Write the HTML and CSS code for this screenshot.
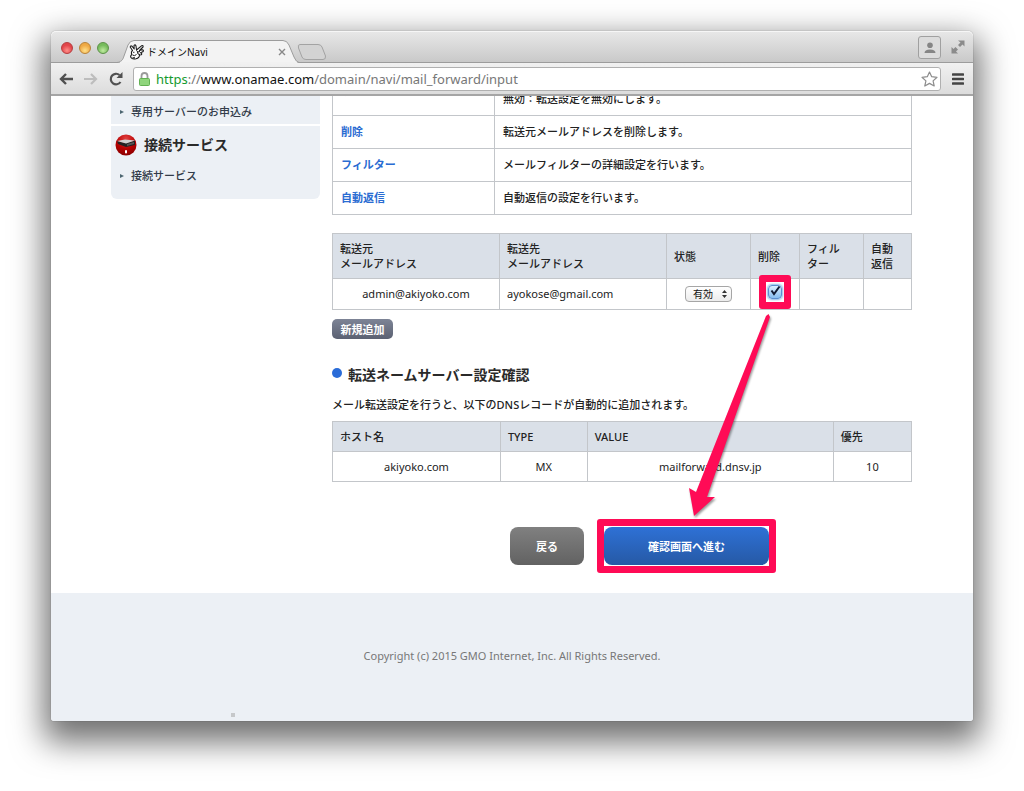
FILE: index.html
```html
<!DOCTYPE html>
<html lang="ja">
<head>
<meta charset="utf-8">
<title>ドメインNavi</title>
<link rel="stylesheet" href="styles.css">
</head>
<body>
<div class="window">
  <header class="chrome">
    <div class="tabbar">
      <div class="lights">
        <button class="light light-red" type="button" aria-label="閉じる"></button>
        <button class="light light-amber" type="button" aria-label="しまう"></button>
        <button class="light light-green" type="button" aria-label="拡大"></button>
      </div>
      <div class="tab">
        <svg class="tab-shape" viewBox="0 0 182 23" aria-hidden="true">
          <path d="M0 22.500C5 22 6 19 7 16L11 5Q13 .5 17 .5H166Q170 .5 172 5L177 17Q179 22 182 22.500" fill="#f3f3f3" stroke="#9c9c9c"/>
          <path d="M3 22.500H180" stroke="#f1f1f1" stroke-width="1.500"/>
        </svg>
        <svg class="favicon" viewBox="0 0 16 16" aria-hidden="true">
          <path d="M3.500 6.500L1.200 3Q1.500 1.200 3 2.200L5.200 5L5 1.500Q6.200 0 7 2L7.500 6L12.500 1.800Q14.500 1 14 3L10.500 6.500L13.500 5.800Q15.200 6.500 13.800 7.800L11.500 8.800Q13.500 9.500 12.200 10.800L10.500 11Q10.500 14 7 14.800Q3 15.500 2 13.500Q1 12 2.800 10.500Q1.800 8 3.500 6.500Z" fill="#fff" stroke="#1c1c1c" stroke-width="1.100" stroke-linejoin="round"/>
          <path d="M7.500 6.500L8.800 8L11 7.500M8.500 8L9 10L11 10.500M3.500 11Q5.500 12.500 7.500 10.500" fill="none" stroke="#1c1c1c"/>
          <path d="M4.300 8.300H5.300M3.500 13.800H6" stroke="#1c1c1c" stroke-width="1.200"/>
        </svg>
        <span class="tab-title">ドメインNavi</span>
        <button class="tab-close" type="button" aria-label="タブを閉じる"><svg viewBox="0 0 8 8" width="8" height="8"><path d="M1 1L7 7M7 1L1 7" stroke="#888" stroke-width="1.400"/></svg></button>
      </div>
      <button class="newtab" type="button" aria-label="新しいタブ"><svg viewBox="0 0 30 16" width="30" height="16"><path d="M3 .5H21Q24 .5 25 3L28.500 12Q29 15.500 26 15.500H9Q6 15.500 5 13L1.500 4Q.5 .5 3 .5Z" fill="#d3d3d3" stroke="#a3a3a3"/></svg></button>
      <span class="spacer"></span>
      <button class="profile" type="button" aria-label="ユーザー"><svg viewBox="0 0 12 12" width="12" height="12"><circle cx="6" cy="3.200" r="2.800" fill="#858585"/><path d="M.5 11Q.5 7.500 6 7.500T11.500 11Z" fill="#858585"/></svg></button>
      <button class="fullscreen" type="button" aria-label="フルスクリーン"><svg viewBox="0 0 14 14" width="14" height="14"><path d="M7 .5H13.500V6.500L11.500 4.500L9 7L7 5L9.500 2.500ZM.5 7V13.500H7L5 11.500L7 9.500L4.500 7L2.500 9Z" fill="#8b8b8b"/></svg></button>
    </div>
    <div class="toolbar">
      <button class="nav" type="button" aria-label="戻る"><svg viewBox="0 0 14 12" width="14" height="12"><path d="M7 1L2 6L7 11M2 6H14" fill="none" stroke="#505050" stroke-width="2.400"/></svg></button>
      <button class="nav" type="button" aria-label="進む"><svg viewBox="0 0 14 12" width="14" height="12"><path d="M7 1L12 6L7 11M12 6H0" fill="none" stroke="#bdbdbd" stroke-width="2.200"/></svg></button>
      <button class="nav" type="button" aria-label="再読み込み"><svg viewBox="0 0 14 14" width="14" height="14"><path d="M11.500 10A5.300 5.300 0 1 1 10.500 3" fill="none" stroke="#505050" stroke-width="2.200"/><path d="M13.500 0V6H7.500Z" fill="#505050"/></svg></button>
      <div class="address">
        <svg class="lock" viewBox="0 0 11 14" width="11" height="14" aria-hidden="true"><path d="M2.500 7V4A3 3 0 0 1 8.500 4V7" fill="none" stroke="#9a9a9a" stroke-width="1.800"/><rect x=".5" y="6.500" width="10" height="7" rx="1" fill="#8fd57c" stroke="#62b152"/></svg>
        <a class="url" href="#"><span class="secure">https</span>://<span class="host">www.onamae.com</span>/domain/navi/mail_forward/input</a>
        <button class="star" type="button" aria-label="ブックマーク"><svg viewBox="0 0 17 16" width="17" height="16"><path d="M8.500 1L10.700 5.700L16 6.300L12.100 9.900L13.200 15L8.500 12.400L3.800 15L4.900 9.900L1 6.300L6.300 5.700Z" fill="#fff" stroke="#8d8d8d" stroke-width="1.200" stroke-linejoin="round"/></svg></button>
      </div>
      <button class="menu" type="button" aria-label="メニュー"><svg viewBox="0 0 12 12" width="12" height="12"><path d="M1 1.500H11M1 6H11M1 10.500H11" stroke="#444" stroke-width="2.600" stroke-linecap="round"/></svg></button>
    </div>
  </header>

  <div class="page">
    <aside class="sidebar">
      <ul class="side-block">
        <li><a href="#">専用サーバーのお申込み</a></li>
      </ul>
      <section class="side-block side-last">
        <h2 class="side-title">
          <svg viewBox="0 0 22 22" width="22" height="22" aria-hidden="true">
            <defs><radialGradient id="ball" cx=".5" cy=".2" r=".8"><stop offset="0" stop-color="#e04040"/><stop offset=".6" stop-color="#b80000"/><stop offset="1" stop-color="#8a0000"/></radialGradient></defs>
            <circle cx="11" cy="11" r="10.500" fill="url(#ball)"/>
            <path d="M2 7L11 9L20 6.500V11L11 13L3 10Z" fill="#222"/>
            <path d="M2 7L10 5.500L20 6.500L11 9.500Z" fill="#d0d0d0"/>
            <path d="M12 10L19 8V10L12 12Z" fill="#555"/>
            <rect x="10" y="16" width="2" height="3.500" rx="1" fill="#fff"/>
          </svg>
          接続サービス
        </h2>
        <ul>
          <li><a href="#">接続サービス</a></li>
        </ul>
      </section>
    </aside>

    <main class="main">
      <table class="grid guide">
        <colgroup><col class="w-guide"><col></colgroup>
        <tbody>
          <tr class="tall"><th scope="row"><a href="#">状態</a></th><td>無効：転送設定を無効にします。</td></tr>
          <tr><th scope="row"><a href="#">削除</a></th><td>転送元メールアドレスを削除します。</td></tr>
          <tr><th scope="row"><a href="#">フィルター</a></th><td>メールフィルターの詳細設定を行います。</td></tr>
          <tr><th scope="row"><a href="#">自動返信</a></th><td>自動返信の設定を行います。</td></tr>
        </tbody>
      </table>

      <table class="grid forward">
        <colgroup><col class="w-addr"><col class="w-addr"><col class="w-state"><col class="w-del"><col class="w-filter"><col></colgroup>
        <thead>
          <tr><th>転送元<br>メールアドレス</th><th>転送先<br>メールアドレス</th><th>状態</th><th>削除</th><th>フィル<br>ター</th><th>自動<br>返信</th></tr>
        </thead>
        <tbody>
          <tr>
            <td class="center">admin@akiyoko.com</td>
            <td>ayokose@gmail.com</td>
            <td class="center">
              <span class="select-wrap">
                <select class="state" aria-label="状態"><option>有効</option></select>
                <svg class="updown" viewBox="0 0 5 8" width="5" height="8" aria-hidden="true"><path d="M2.500 0L5 3H0ZM2.500 8L5 5H0Z" fill="#333"/></svg>
              </span>
            </td>
            <td class="check-cell">
              <span class="check-wrap">
                <input class="check" type="checkbox" checked aria-label="削除">
                <svg class="tick" viewBox="0 0 14 14" width="14" height="14" aria-hidden="true"><path d="M3.500 5.500L6 9L11.500 1.500" fill="none" stroke="#111b33" stroke-width="2"/></svg>
                <span class="mark mark-check"></span>
              </span>
            </td>
            <td></td><td></td>
          </tr>
        </tbody>
      </table>
      <button class="add" type="button">新規追加</button>

      <h2 class="heading">転送ネームサーバー設定確認</h2>
      <p class="lead">メール転送設定を行うと、以下のDNSレコードが自動的に追加されます。</p>
      <table class="grid dns">
        <colgroup><col class="w-host"><col class="w-type"><col class="w-value"><col></colgroup>
        <thead><tr><th>ホスト名</th><th>TYPE</th><th>VALUE</th><th>優先</th></tr></thead>
        <tbody><tr><td>akiyoko.com</td><td>MX</td><td>mailforward.dnsv.jp</td><td>10</td></tr></tbody>
      </table>

      <div class="actions">
        <button class="btn back" type="button">戻る</button>
        <span class="next-wrap">
          <button class="btn next" type="submit">確認画面へ進む</button>
          <span class="mark mark-next"></span>
        </span>
      </div>

      <svg class="arrow" viewBox="685 310 90 210" width="90" height="210" aria-hidden="true">
        <path d="M768.500 314L766 316L696 492L689 488L694 516L715 497L707 497L770 317Z" fill="#ff0b56"/>
      </svg>
    </main>
  </div>

  <footer class="footer">
    <p>Copyright (c) 2015 GMO Internet, Inc. All Rights Reserved.</p>
    <span class="dot"></span>
  </footer>
</div>
</body>
</html>
```
FILE: styles.css
```css
* { box-sizing: border-box; }

body {
  margin: 0;
  min-height: 100vh;
  padding: 31px 51px 70px;
  display: flex;
  background: #fff;
  color: #333;
  font: 500 11px/15px "Noto Sans", "Noto Sans CJK JP", sans-serif;
}

button, select, input { margin: 0; font: inherit; }
button { padding: 0; border: 0; background: none; }
svg { display: block; }
ul, h2, p { margin: 0; padding: 0; }
ul { list-style: none; }
a { text-decoration: none; }

.window {
  flex: 1;
  min-width: 0;
  display: flex;
  flex-direction: column;
  border-radius: 5px 5px 3px 3px;
  background: #fff;
  box-shadow: 0 0 1px rgba(0, 0, 0, .6), 0 14px 32px 7px rgba(0, 0, 0, .56);
}

/* Browser frame */
.tabbar {
  height: 32px;
  display: flex;
  align-items: center;
  padding: 0 8px 0 10px;
  border-radius: 5px 5px 0 0;
  border-bottom: 1px solid #9c9c9c;
  background: linear-gradient(#e8e8e8, #c9c9c9);
  box-shadow: inset 0 1px #f6f6f6;
}
.lights { display: flex; gap: 6px; margin-right: 8px; padding-top: 2px; }
.light { width: 12px; height: 12px; border-radius: 50%; border: 1px solid; }
.light-red { background: radial-gradient(circle at 50% 75%, #ff8f89, #e2454a 60%); border-color: #b53c3e; }
.light-amber { background: radial-gradient(circle at 50% 75%, #ffe08a, #efa944 60%); border-color: #b98236; }
.light-green { background: radial-gradient(circle at 50% 75%, #c0eba0, #76bb5c 60%); border-color: #5c9148; }

.tab {
  position: relative;
  align-self: flex-end;
  width: 182px;
  height: 22px;
  display: flex;
  align-items: center;
  padding: 2px 13px 0 12px;
  color: #111;
  font: 400 10px/14px "Noto Sans", "Noto Sans CJK JP", sans-serif;
}
.tab-shape { position: absolute; left: 0; top: 0; width: 182px; height: 23px; fill: none; }
.favicon { position: relative; width: 16px; height: 16px; margin-right: 2px; }
.tab-title { position: relative; flex: 1; }
.tab-close { position: relative; }
.newtab { align-self: flex-end; margin: 0 0 2px -2px; }
.spacer { flex: 1; }
.profile {
  width: 23px;
  height: 23px;
  display: grid;
  place-items: center;
  margin: 2px 10px 0 0;
  border: 1px solid #a0a0a0;
  border-radius: 3px;
  background: #dcdcdc;
}

.toolbar {
  height: 33px;
  display: flex;
  align-items: center;
  gap: 11px;
  padding: 0 9px 0 8px;
  border-bottom: 2px solid #a5a5a5;
  background: linear-gradient(#f1f1f1, #dcdcdc);
}
.address {
  flex: 1;
  height: 24px;
  display: flex;
  align-items: center;
  margin-left: -1px;
  padding: 0 2px 0 5px;
  border: 1px solid #b0b0b0;
  border-radius: 3px;
  background: #fff;
}
.url {
  flex: 1;
  margin-left: 6px;
  color: #777;
  font: 400 13px/18px "Noto Sans", sans-serif;
}
.secure { color: #159a2f; }
.host { color: #111; }

/* Scrolled document */
.page {
  display: flex;
  gap: 12px;
  padding: 0 61px 28px 60px;
  overflow: hidden;
}
.sidebar { width: 209px; display: flex; flex-direction: column; gap: 2px; }
.side-block { padding: 8px 4px 5px; background: #ecf0f5; }
.side-block li { padding-left: 16px; }
.side-block a { display: flex; align-items: center; color: #333c4a; }
.side-block a::before {
  content: "";
  margin: 0 7px 0 -11px;
  border: 2px solid transparent;
  border-left: 4px solid #4d6670;
  border-right: 0;
}
.side-last { padding: 8px 4px 16px; border-radius: 0 0 6px 6px; }
.side-title {
  display: flex;
  align-items: center;
  gap: 7px;
  margin-bottom: 12px;
  color: #2a2a2a;
  font-size: 14px;
  font-weight: 700;
  line-height: 22px;
}

.main { position: relative; flex: 1; min-width: 0; }

.grid { width: 100%; table-layout: fixed; border-collapse: collapse; color: #222; }
.grid th, .grid td { border: 1px solid #c3c6ca; padding: 7px; text-align: left; font-weight: 500; }
.grid thead th { background: #dae0e8; }

.guide { margin-top: -29px; }
.guide th, .guide td { height: 33px; padding: 7px 8px 9px; }
.guide a { color: #2a6cd2; font-weight: 700; }
.guide .tall td { height: 48px; vertical-align: bottom; }

.w-guide { width: 28%; }

.forward { margin-top: 18px; }
.forward td { height: 31px; padding: 3px 7px 5px; font-weight: 400; }
.forward .center { text-align: center; }
.forward .check-cell { padding: 3px 7px 7px; }
.w-addr { width: 167px; }
.w-state { width: 84px; }
.w-del { width: 49px; }
.w-filter { width: 64px; }

.select-wrap { position: relative; display: inline-block; vertical-align: middle; }
.state {
  appearance: none;
  display: block;
  width: 47px;
  height: 16px;
  padding: 0 0 0 7px;
  border: 1px solid #a6a6a6;
  border-radius: 4px;
  background: linear-gradient(#fff, #ececec);
  color: #111;
  font-size: 10px;
  line-height: 14px;
}
.updown { position: absolute; right: 5px; top: 4px; }

.check-wrap { position: relative; display: block; width: 14px; height: 14px; margin: 0 auto; }
.check {
  appearance: none;
  display: block;
  width: 14px;
  height: 14px;
  border: 1px solid #5b8fd0;
  border-radius: 4px;
  background: linear-gradient(#dcefff, #86bdf0);
  box-shadow: 0 0 2px 1px #8db9e8;
}
.tick { position: absolute; left: 0; top: 0; }

.mark { position: absolute; border: 7px solid #ff0b56; border-radius: 3px; pointer-events: none; }
.mark-check { inset: -10px -9px; }
.mark-next { inset: -8px -7px; }

.add {
  display: block;
  width: 61px;
  height: 20px;
  margin-top: 9px;
  border-radius: 5px;
  background: linear-gradient(#7d8496, #5b6172);
  color: #fff;
  font-weight: 700;
}

.heading {
  display: flex;
  align-items: center;
  gap: 6px;
  margin-top: 25px;
  color: #2a2a2a;
  font-size: 14px;
  font-weight: 700;
  line-height: 22px;
}
.heading::before {
  content: "";
  width: 10px;
  height: 10px;
  margin-bottom: 4px;
  border-radius: 50%;
  background: #2a6cd8;
}
.lead { margin: 11px 0 9px; color: #222; }

.dns td { text-align: center; font-weight: 400; }
.w-host { width: 29%; }
.w-type { width: 15%; }
.w-value { width: 42.500%; }

.actions { display: flex; justify-content: center; gap: 20px; margin-top: 45px; padding-left: 35px; }
.btn { height: 38px; border-radius: 8px; color: #fff; font-weight: 700; }
.back { width: 74px; background: linear-gradient(#808080, #626262); }
.next-wrap { position: relative; }
.next { width: 165px; background: linear-gradient(#2e71d6, #2659a5); }

.arrow {
  position: absolute;
  left: 353px;
  top: 214px;
  filter: drop-shadow(1px 2px 1px rgba(0, 0, 0, .4));
  pointer-events: none;
}

.footer {
  flex: 1;
  display: flex;
  flex-direction: column;
  justify-content: space-between;
  padding: 55px 180px 4px;
  border-radius: 0 0 3px 3px;
  background: #ecf0f5;
  color: #777;
  font-weight: 400;
  text-align: center;
}
.dot { width: 4px; height: 4px; background: #c6c8ca; }
```
